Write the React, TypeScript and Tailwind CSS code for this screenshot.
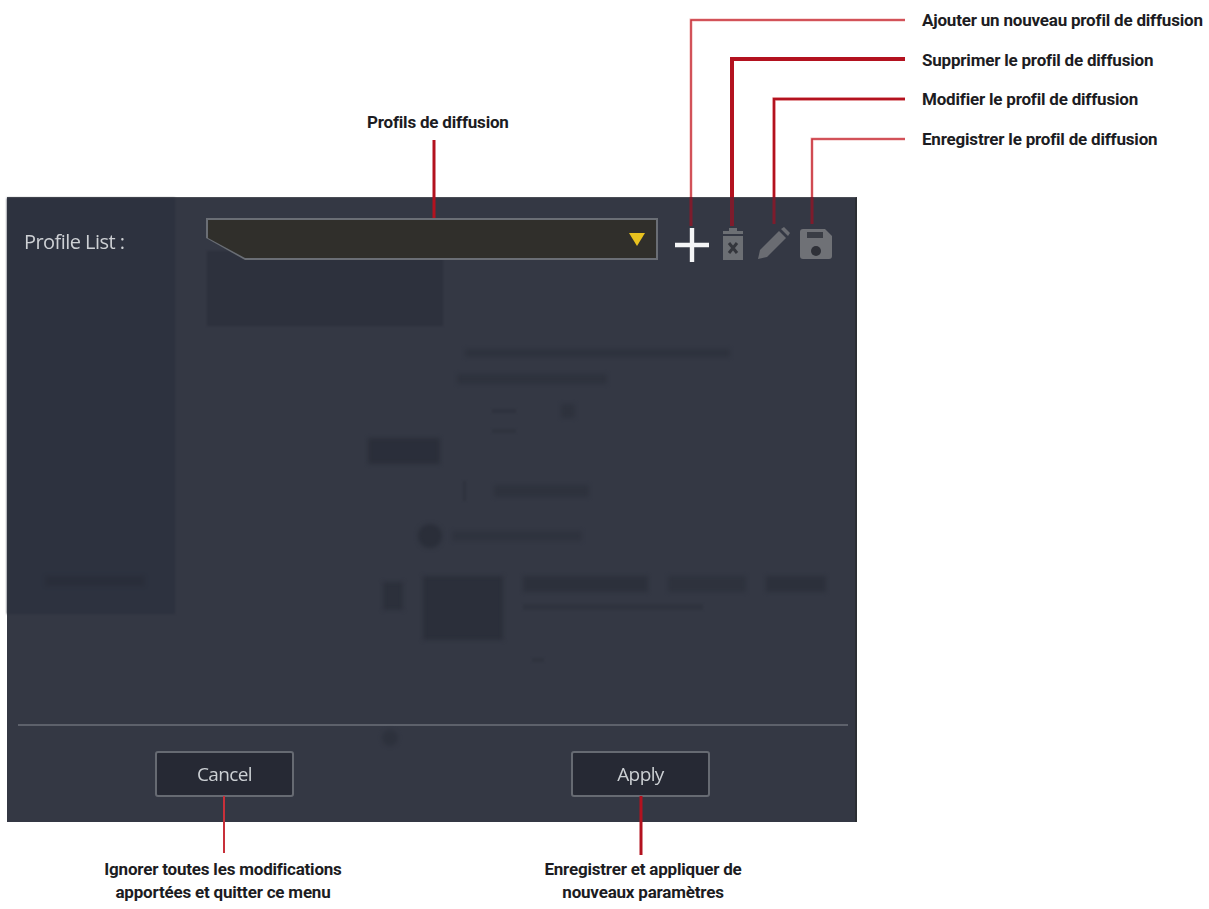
const label = "font-['Roboto',sans-serif] font-bold text-[#1c1c22] tracking-[-0.2px]";

function Leaders() {
  const thin = "#c8303a";
  const thick = "#b3121f";
  const inside = "#7d1c2c";
  return (
    <svg className="absolute left-0 top-0 pointer-events-none" width="1209" height="909" fill="none">
      <path d="M905 20H691V197" stroke="#f2b8b8" strokeWidth="3" />
      <path d="M905 20H691V197" stroke={thin} strokeWidth="1.5" />
      <path d="M905 59H732V197" stroke={thick} strokeWidth="4" />
      <path d="M905 99H774V197" stroke="#f0b0b0" strokeWidth="3.5" />
      <path d="M905 99H774V197" stroke={thick} strokeWidth="2.4" />
      <path d="M905 139H812V197" stroke="#f2b8b8" strokeWidth="3" />
      <path d="M905 139H812V197" stroke={thin} strokeWidth="1.6" />
      <path d="M691 197V226" stroke={inside} strokeWidth="3" />
      <path d="M732 197V226" stroke={inside} strokeWidth="4" />
      <path d="M774 197V224" stroke={inside} strokeWidth="3" />
      <path d="M812 197V224" stroke={inside} strokeWidth="3" />
      <path d="M434 140V218" stroke={thick} strokeWidth="3" />
      <path d="M224 796V853" stroke={thin} strokeWidth="2" />
      <path d="M641 796V855" stroke={thick} strokeWidth="3" />
    </svg>
  );
}

function GhostContent() {
  return (
    <div className="flex h-[416px] shrink-0">
      <div className="w-[168px] bg-[#2d323f] blur-[1px] flex flex-col justify-end pb-[28px] pl-[38px]">
        <div className="w-[100px] h-[10px] bg-[#272b37] opacity-60 blur-[2px]" />
      </div>
      <div className="flex-1 pt-[53px] pl-[32px] flex flex-col">
        <div className="shrink-0 w-[236px] h-[75px] bg-[#2d313d] blur-[1px]" />
        <div className="shrink-0 ml-[258px] mt-[23px] w-[265px] h-[8px] bg-[#2c303b] opacity-70 blur-[2px]" />
        <div className="shrink-0 ml-[250px] mt-[17px] w-[150px] h-[10px] bg-[#2c303b] opacity-70 blur-[2px]" />
        <div className="shrink-0 ml-[285px] mt-[20px] flex items-center gap-[45px]">
          <div className="w-[24px] h-[4px] bg-[#2c303b] opacity-60 blur-[1px]" />
          <div className="w-[14px] h-[14px] bg-[#2c303b] opacity-70 blur-[2px]" />
        </div>
        <div className="shrink-0 ml-[285px] mt-[11px] w-[24px] h-[4px] bg-[#2c303b] opacity-50 blur-[1px]" />
        <div className="shrink-0 mt-[5px] ml-[161px] w-[72px] h-[26px] bg-[#2a2e39] opacity-90 blur-[2px]" />
        <div className="shrink-0 ml-[256px] mt-[17px] flex items-center gap-[28px]">
          <div className="w-[3px] h-[20px] bg-[#2c303b] opacity-60 blur-[1px]" />
          <div className="w-[95px] h-[12px] bg-[#2c303b] opacity-70 blur-[2px]" />
        </div>
        <div className="shrink-0 ml-[211px] mt-[23px] flex items-center gap-[10px]">
          <div className="w-[24px] h-[24px] rounded-full bg-[#2a2e39] blur-[2px]" />
          <div className="w-[130px] h-[10px] bg-[#2c303b] opacity-60 blur-[2px]" />
        </div>
        <div className="shrink-0 ml-[176px] mt-[28px] flex items-start gap-[20px]">
          <div className="mt-[6px] w-[20px] h-[28px] bg-[#2c303b] blur-[2px]" />
          <div className="w-[80px] h-[64px] bg-[#2b2f3a] blur-[2px]" />
          <div className="flex flex-col gap-[12px]">
            <div className="flex gap-[20px]">
              <div className="w-[125px] h-[16px] bg-[#2c303b] opacity-90 blur-[2px]" />
              <div className="w-[78px] h-[16px] bg-[#2c303b] opacity-70 blur-[2px]" />
              <div className="w-[60px] h-[16px] bg-[#2c303b] opacity-90 blur-[2px]" />
            </div>
            <div className="w-[180px] h-[6px] bg-[#2c303b] opacity-50 blur-[1px]" />
          </div>
        </div>
        <div className="shrink-0 ml-[325px] mt-[18px] w-[12px] h-[4px] bg-[#2c303b] opacity-50 blur-[1px]" />
      </div>
    </div>
  );
}

function PlusIcon() {
  return (
    <svg width="34" height="34" viewBox="0 0 34 34" className="blur-[0.4px]">
      <path d="M0 17h34M17 0v34" stroke="#f4f5f6" strokeWidth="4.4" />
    </svg>
  );
}
function TrashIcon() {
  return (
    <svg width="24" height="32" viewBox="0 0 24 32" className="blur-[0.6px]">
      <path d="M2 3h20v3H2zM8 0h8v3H8z" fill="#6c6f74" />
      <path d="M2 8h20v24H2z" fill="#6c6f74" />
      <path d="M8 15l8 10M16 15l-8 10" stroke="#34363c" strokeWidth="3" />
    </svg>
  );
}
function PenIcon() {
  return (
    <svg width="34" height="34" viewBox="0 0 34 34" className="blur-[0.6px]">
      <path d="M1 33l2-9L22 5l7 7-19 19z" fill="#6a6c72" />
      <path d="M24 3l3-2 6 6-2 3z" fill="#6a6c72" />
    </svg>
  );
}
function SaveIcon() {
  return (
    <svg width="34" height="32" viewBox="0 0 34 32" className="blur-[0.6px]">
      <path d="M1 4a3 3 0 0 1 3-3h22l7 7v20a3 3 0 0 1-3 3H4a3 3 0 0 1-3-3z" fill="#6f7176" />
      <path d="M8 4h16v6H8z" fill="#3a3d45" />
      <circle cx="17" cy="23" r="5" fill="#2f3138" />
    </svg>
  );
}

function DialogButton({ text, className }: { text: string; className: string }) {
  return (
    <div
      className={
        "w-[139px] h-[46px] border-2 border-[#666a72] rounded-[3px] bg-[#262934] flex items-center justify-center text-[#ccd0d4] text-[19px] tracking-[-0.6px] font-['Open_Sans',sans-serif] blur-[0.3px] " +
        className
      }
    >
      {text}
    </div>
  );
}

export default function App() {
  return (
    <div className="relative w-[1209px] h-[909px] bg-white overflow-hidden">
      <header className="h-[197px] flex">
        <div className={"ml-[367px] mt-[112px] text-[17px] leading-[20px] h-[20px] whitespace-nowrap " + label}>Profils de diffusion</div>
        <div className={"ml-auto w-[287px] pt-[10px] text-[17px] flex flex-col " + label}>
          <div className="h-[39.5px] leading-[20px] whitespace-nowrap">Ajouter un nouveau profil de diffusion</div>
          <div className="h-[39.5px] leading-[20px]">Supprimer le profil de diffusion</div>
          <div className="h-[39.5px] leading-[20px]">Modifier le profil de diffusion</div>
          <div className="h-[39.5px] leading-[20px]">Enregistrer le profil de diffusion</div>
        </div>
      </header>

      <main className="relative ml-[7px] w-[850px] h-[625px] bg-[#343844] flex flex-col border-r-2 border-[#2b2e33] border-t border-t-[#4a4d55]">
        <GhostContent />

        <div className="absolute left-[17px] top-[20px] h-[42px] flex items-start">
          <div className="w-[182px] shrink-0 pt-[11px] text-[20px] leading-[26px] tracking-[-0.55px] text-[#cdd0d4] font-['Open_Sans',sans-serif] blur-[0.3px]">
            Profile List :
          </div>
          <div className="relative shrink-0 w-[452px] h-[42px] bg-[#6a6e75] [clip-path:polygon(0_0,100%_0,100%_100%,39px_100%,0_20px)]">
            <div className="absolute inset-[2px] bg-[#302f2b] [clip-path:polygon(0_0,100%_0,100%_100%,37px_100%,0_18px)]" />
            <svg className="absolute right-[13px] top-[15px]" width="16" height="13" viewBox="0 0 16 13">
              <path d="M0 0h16L8 13z" fill="#e8c21f" />
            </svg>
          </div>
          <div className="ml-[17px] mt-[10px] flex items-start shrink-0">
            <PlusIcon />
            <div className="ml-[12px]"><TrashIcon /></div>
            <div className="ml-[12px] -mt-[2px]"><PenIcon /></div>
            <div className="ml-[8px]"><SaveIcon /></div>
          </div>
        </div>

        <div className="mt-[110px] ml-[11px] mr-[7px] h-[2px] bg-[#5d616b] shrink-0" />
        <div className="h-[25px] pl-[375px] pt-[4px] shrink-0">
          <div className="w-[16px] h-[16px] rounded-full bg-[#2c303b] opacity-80 blur-[2px]" />
        </div>
        <div className="flex shrink-0">
          <DialogButton text="Cancel" className="ml-[148px]" />
          <DialogButton text="Apply" className="ml-[277px]" />
        </div>
      </main>

      <footer className={"flex text-[17px] leading-[23px] pt-[36px] text-center " + label}>
        <div className="w-[446px]">
          Ignorer toutes les modifications
          <br />
          apportées et quitter ce menu
        </div>
        <div className="w-[394px]">
          Enregistrer et appliquer de
          <br />
          nouveaux paramètres
        </div>
      </footer>

      <Leaders />
    </div>
  );
}
